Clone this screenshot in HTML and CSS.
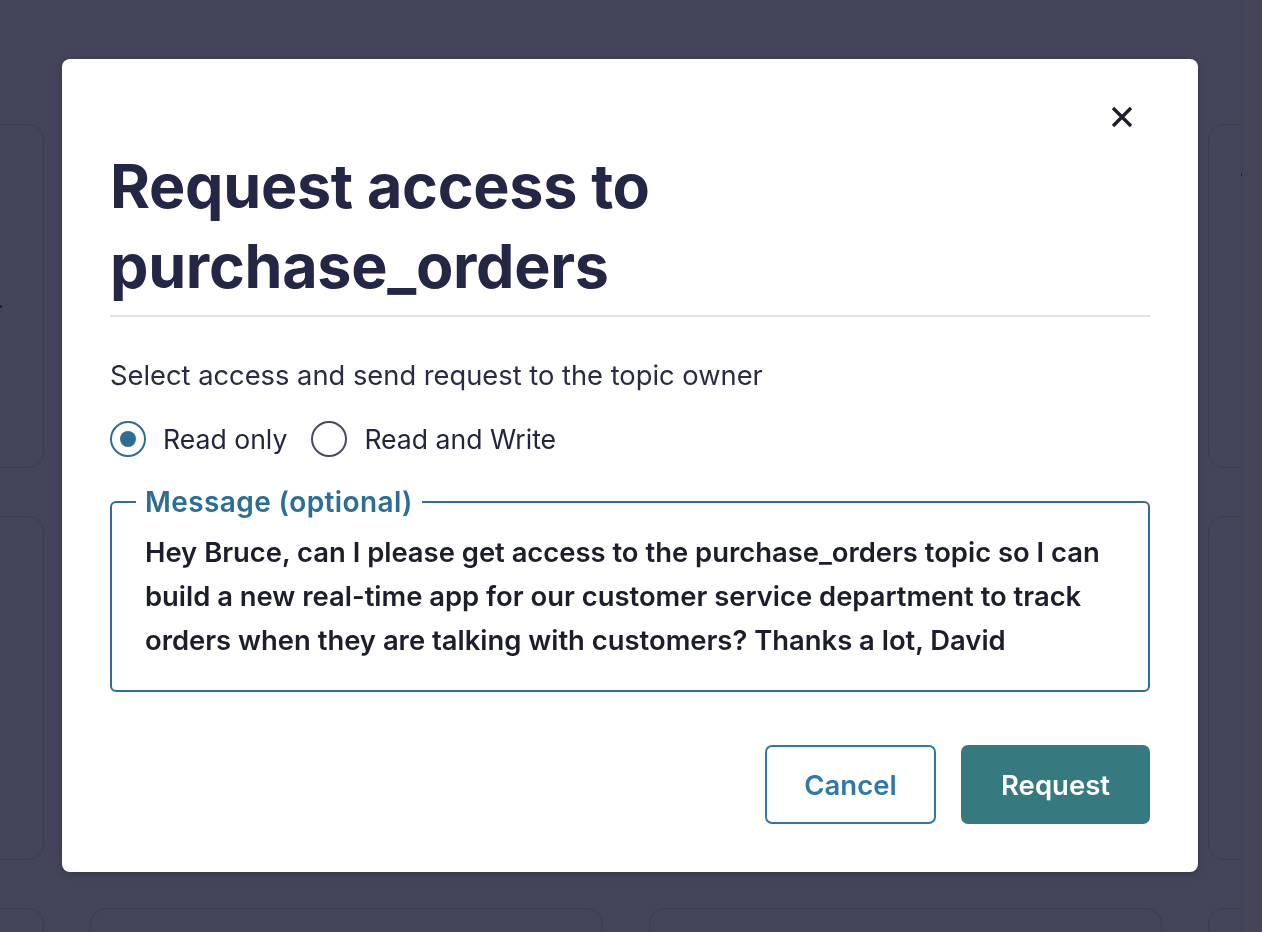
FILE: index.html
```html
<!DOCTYPE html>
<html lang="en">
<head>
<meta charset="utf-8">
<title>Request access</title>
<link rel="stylesheet" href="styles.css">
</head>
<body>
<div class="page">
  <div class="grid">
    <div class="card"><span class="dot dot-r"></span></div>
    <div class="card"></div>
    <div class="card"></div>
    <div class="card"><span class="dot dot-l"></span></div>
    <div class="card"></div>
    <div class="card"></div>
    <div class="card"></div>
    <div class="card"></div>
    <div class="card"></div>
    <div class="card"></div>
    <div class="card"></div>
    <div class="card"></div>
  </div>
  <div class="scrollbar"></div>
</div>

<div class="overlay">
  <div class="modal" role="dialog" aria-labelledby="title">
    <div class="modal-top">
      <button class="close" aria-label="Close">
        <svg width="24" height="24" viewBox="0 0 24 24"><path d="M3 3 L21 21 M21 3 L3 21" stroke="#1d1e2c" stroke-width="3.4" stroke-linecap="butt" fill="none"/></svg>
      </button>
    </div>
    <h1 id="title" class="title">Request access to<br>purchase_orders</h1>
    <p class="lead">Select access and send request to the topic owner</p>
    <div class="radios">
      <label class="radio"><span class="circle checked"><span class="inner"></span></span>Read only</label>
      <label class="radio"><span class="circle"></span>Read and Write</label>
    </div>
    <fieldset class="message">
      <legend>Message (optional)</legend>
      <div class="msg-text">Hey Bruce, can I please get access to the purchase_orders topic so I can build a new real-time app for our customer service department to track orders when they are talking with customers? Thanks a lot, David</div>
    </fieldset>
    <div class="actions">
      <button class="btn btn-outline">Cancel</button>
      <button class="btn btn-primary">Request</button>
    </div>
  </div>
</div>
</body>
</html>
```

FILE: styles.css
```css
* { box-sizing: border-box; }
html, body { margin: 0; padding: 0; }
body {
  width: 1262px;
  height: 932px;
  overflow: hidden;
  background: #434459;
  font-family: Inter, "Noto Sans", sans-serif;
}
.page {
  position: relative;
  width: 1262px;
  height: 932px;
  overflow: hidden;
}
.grid {
  display: grid;
  grid-template-columns: repeat(4, 513px);
  grid-auto-rows: 344px;
  column-gap: 46px;
  row-gap: 48px;
  margin-left: -469px;
  padding-top: 124px;
}
.card {
  position: relative;
  border: 1px solid #3b3c50;
  border-radius: 16px;
  background: #434459;
}
.dot {
  position: absolute;
  width: 3px;
  height: 3px;
  background: #22232f;
}
.dot-r { right: 41px; top: 180px; }
.dot-l { left: 32px; top: 48px; }
.scrollbar {
  position: absolute;
  top: 0;
  right: 0;
  width: 20px;
  height: 932px;
  background: #444559;
  border-left: 1px solid #404155;
}
.overlay {
  position: fixed;
  inset: 0;
}
.modal {
  position: absolute;
  left: 62px;
  top: 59px;
  width: 1136px;
  height: 813px;
  background: #ffffff;
  border-radius: 8px;
  box-shadow: 0 2px 6px rgba(20, 20, 30, 0.25);
  padding: 44px 48px 48px;
  display: flex;
  flex-direction: column;
}
.modal-top {
  display: flex;
  justify-content: flex-end;
  height: 28px;
}
.close {
  border: 0;
  background: none;
  padding: 0;
  margin-right: 16px;
  width: 24px;
  height: 28px;
  display: flex;
  align-items: center;
  justify-content: center;
  cursor: pointer;
}
.title {
  margin: 15px 0 0;
  font-size: 61px;
  line-height: 80px;
  font-weight: 700;
  color: #242645;
  letter-spacing: -0.3px;
  padding-bottom: 9px;
  border-bottom: 2px solid #e3e3e8;
}
.lead {
  margin: 43px 0 0;
  font-size: 27.3px;
  line-height: 32px;
  color: #2a2b44;
}
.radios {
  display: flex;
  gap: 24px;
  margin-top: 29px;
}
.radio {
  display: flex;
  align-items: center;
  gap: 17px;
  font-size: 26.6px;
  line-height: 36px;
  color: #23243d;
}
.circle {
  width: 36px;
  height: 36px;
  border-radius: 50%;
  border: 2px solid #4a4a62;
  display: flex;
  align-items: center;
  justify-content: center;
}
.circle.checked { border-color: #2e6d94; }
.inner {
  width: 16px;
  height: 16px;
  border-radius: 50%;
  background: #2e6d94;
}
.message {
  margin: 30px 0 0;
  padding: 13px 33px 28px;
  border: 2px solid #2e6d94;
  border-radius: 6px;
}
.message legend {
  padding: 0 9px;
  margin-left: -9px;
  font-size: 28px;
  font-weight: 600;
  letter-spacing: 0.4px;
  color: #2e6d94;
  line-height: 30px;
}
.msg-text {
  font-size: 27.4px;
  font-weight: 600;
  line-height: 44px;
  color: #1d1e2c;
}
.actions {
  margin-top: auto;
  display: flex;
  justify-content: flex-end;
  gap: 25px;
}
.btn {
  height: 79px;
  border-radius: 7px;
  font-family: Inter, "Noto Sans", sans-serif;
  font-size: 27.5px;
  font-weight: 600;
  cursor: pointer;
}
.btn-outline {
  width: 171px;
  background: #ffffff;
  border: 2px solid #2f79a9;
  color: #2f79a9;
}
.btn-primary {
  width: 189px;
  background: #367a80;
  border: 0;
  color: #ffffff;
}
```
